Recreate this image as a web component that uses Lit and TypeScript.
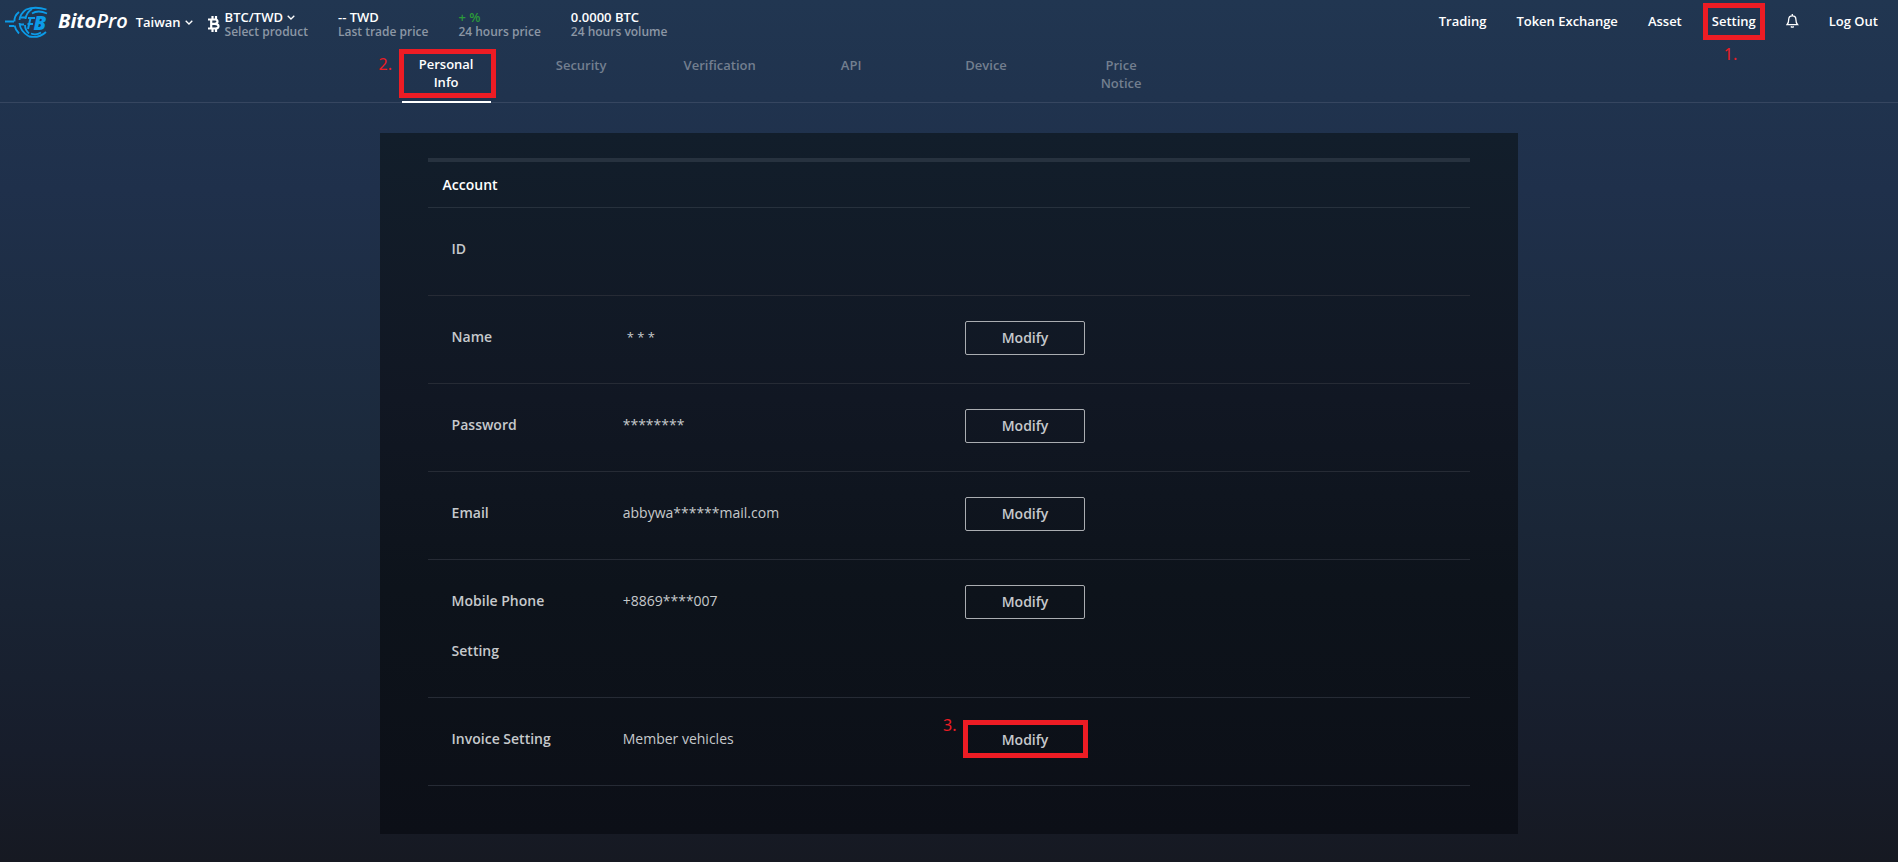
import { LitElement, html, css, nothing } from "lit";
import { customElement } from "lit/decorators.js";

interface Row {
  id: string;
  label: string;
  value?: string;
  spaced?: boolean;
  editable?: boolean;
  step?: string;
}

const ROWS: Row[] = [
  { id: "id", label: "ID" },
  { id: "name", label: "Name", value: "* * *", spaced: true, editable: true },
  { id: "password", label: "Password", value: "********", editable: true },
  { id: "email", label: "Email", value: "abbywa******mail.com", editable: true },
  { id: "phone", label: "Mobile Phone Setting", value: "+8869****007", editable: true },
  { id: "invoice", label: "Invoice Setting", value: "Member vehicles", editable: true, step: "3." },
];

const STATS = [
  { value: "-- TWD", label: "Last trade price", tone: "" },
  { value: "+ %", label: "24 hours price", tone: "up" },
  { value: "0.0000 BTC", label: "24 hours volume", tone: "" },
];

const TABS = ["Personal Info", "Security", "Verification", "API", "Device", "Price Notice"];

const chevron = html`<svg class="chevron" viewBox="0 0 8 5" aria-hidden="true">
  <path d="M0.7 0.7 4 4 7.3 0.7" fill="none" stroke="currentColor" stroke-width="1.3" />
</svg>`;

@customElement("app-header")
export class AppHeader extends LitElement {
  static styles = css`
    :host { display: flex; justify-content: space-between; height: 48px; padding: 0 20px 0 5px; }
    a { color: inherit; text-decoration: none; }
    button { font: inherit; color: inherit; background: none; border: 0; padding: 0; cursor: pointer; }
    .left, .right, .brand, .pair { display: flex; }
    .left { align-items: flex-start; }
    .brand { align-items: center; gap: 8px; height: 44px; }
    .mark { width: 45px; height: 32px; }
    .word { font-size: 20px; line-height: 42px; height: 44px; font-weight: 700; font-style: italic; }
    .pro { font-weight: 600; }
    .country { margin-left: 8px; line-height: 44px; font-weight: 600; }
    .chevron { width: 8px; height: 5px; margin-left: 4px; vertical-align: 2px; }
    .pair { margin-left: 15px; padding-top: 9px; gap: 5px; text-align: left; }
    .coin { width: 12px; height: 16px; margin-top: 7px; }
    .stat { display: grid; grid-template-rows: 16px 14px; line-height: 16px; font-weight: 600; }
    .stats { display: flex; gap: 30px; padding: 9px 0 0 30px; }
    .sub { font-size: 12px; line-height: 14px; color: #8c97a5; }
    .up { color: #2b9a3a; }
    .right { align-items: center; gap: 30px; height: 42px; font-weight: 600; }
    .marked { position: relative; }
    .marked::after { content: ""; position: absolute; inset: -8px -9px -9px -9px; border: 5px solid #ed1c24; }
    .step { position: absolute; top: 33px; left: 12px; font: 16px/20px "Noto Sans", sans-serif; color: #ed1c24; }
    .bell { width: 13px; height: 14px; display: block; }
  `;

  render() {
    return html`
      <div class="left">
        <a class="brand" href="#">
          <svg class="mark" viewBox="0 0 45 32" fill="none" stroke="#0c9be8" stroke-width="1.8" aria-hidden="true">
            <path d="M0 15.500H9 M4 20H9" />
            <path d="M14 6Q9 10 9.500 15.500 M9.500 19.500Q10.500 24 14 27.500" />
            <path d="M21 3.500Q15 8 14.500 14 M14.500 17Q15 25 24 30.500" />
            <path d="M27 3Q21 7 20.500 13 M20 19Q20 24 24 27.500" />
            <path d="M21 3.500Q30 0 41.500 3.500 M27 7.500Q33 3.500 42 7.500" />
            <path d="M24 30.500Q34 32.500 41 26 M26 27.500Q31 29.500 36 26.500" />
            <path d="M16 11.500H20 M15 18.500H19 M23 12H30 M22.500 18H28 M25.500 12 23 23" stroke-width="2" />
            <text x="28.500" y="24" font-family="Open Sans" font-size="20" font-weight="800" font-style="italic" fill="#0c9be8" stroke="none">B</text>
          </svg>
          <span class="word">Bito<span class="pro">Pro</span></span>
        </a>
        <button class="country">Taiwan${chevron}</button>
        <button class="pair">
          <svg class="coin" viewBox="0 0 12 16" fill="none" stroke="#fff" stroke-width="2.200" aria-hidden="true">
            <path d="M0 3.500H7Q9.500 3.500 9.500 5.500T7 7.800H3 M7 7.800Q10.500 8 10.500 10.300T7 12.500H0 M3.200 3V13 M4.500 0V3 M8 0V3 M4.500 13V16 M8 13V16" />
          </svg>
          <span class="stat"><span>BTC/TWD${chevron}</span><span class="sub">Select product</span></span>
        </button>
        <div class="stats">
          ${STATS.map((s) => html`<div class="stat"><span class=${s.tone}>${s.value}</span><span class="sub">${s.label}</span></div>`)}
        </div>
      </div>
      <nav class="right">
        <a href="#">Trading</a>
        <a href="#">Token Exchange</a>
        <a href="#">Asset</a>
        <a class="marked" href="#">Setting<span class="step">1.</span></a>
        <a href="#" aria-label="Notifications">
          <svg class="bell" viewBox="0 0 13 14" fill="none" stroke="#fff" stroke-width="1.300">
            <path d="M1 10.700Q2.700 9 2.700 5.500Q2.700 1.800 6.300 1.800T9.900 5.500Q9.900 9 11.600 10.700Z M6.300 0V2 M4.800 12.500Q6.300 13.800 7.800 12.500" />
          </svg>
        </a>
        <a href="#">Log Out</a>
      </nav>
    `;
  }
}

@customElement("settings-tabs")
export class SettingsTabs extends LitElement {
  static styles = css`
    :host { display: block; padding: 0 20%; border-bottom: 1px solid #364660; }
    .tabs { display: flex; padding-left: 22px; gap: 46px; margin-bottom: -1px; }
    .tab { position: relative; box-sizing: border-box; width: 89px; height: 55px; padding: 8px 12px 0;
      line-height: 18px; font-weight: 600; text-align: center; color: #737f8f; text-decoration: none; }
    .active { color: #fff; padding-top: 7px; border-bottom: 2px solid #fff; }
    .active::after { content: ""; position: absolute; inset: 1px -5px 3px -3px; border: 5px solid #ed1c24; }
    .step { position: absolute; top: 6px; left: -23px; font: 16px/20px "Noto Sans", sans-serif; color: #ed1c24; }
  `;

  render() {
    return html`<nav class="tabs">
      ${TABS.map((t, i) => html`<a class="tab ${i === 0 ? "active" : ""}" href="#">${t}${i === 0 ? html`<span class="step">2.</span>` : nothing}</a>`)}
    </nav>`;
  }
}

@customElement("account-card")
export class AccountCard extends LitElement {
  static styles = css`
    :host { display: block; margin: 30px 20% 0; padding: 25px 48px 48px;
      background: linear-gradient(#121e2b, #111723 38%, #0d131b 65%, #0c0f17); }
    h2 { margin: 0; padding: 13px 15px 12px; border-top: 4px solid #27323f; border-bottom: 1px solid #27313d;
      font-size: 14px; line-height: 20px; font-weight: 600; color: #fff; }
    .rows { margin: 0; }
    .row { display: grid; grid-template-columns: 4fr 8fr 12fr; min-height: 87px; padding-left: 16px; border-bottom: 1px solid #262b35; }
    .label, .value, .action { margin: 0; padding: 0 8px; font-size: 14px; color: #c6c9cc; }
    .label { padding: 16px 60px 21px 8px; line-height: 50px; font-weight: 600; }
    .wide { padding-right: 8px; }
    .value { padding-top: 16px; line-height: 50px; }
    .spaced { padding-left: 12px; font-size: 13px; }
    .action { padding-top: 25px; }
    .modify { position: relative; box-sizing: border-box; width: 120px; height: 34px; padding: 0; background: none;
      border: 1px solid #aaadb1; border-radius: 2px; font: 600 14px/20px "Open Sans", sans-serif; color: #c6c9cc; cursor: pointer; }
    .marked::after { content: ""; position: absolute; inset: -4px -4px -2px -3px; border: 5px solid #ed1c24; }
    .step { position: absolute; top: -9px; left: -23px; font: 16px/20px "Noto Sans", sans-serif; color: #ed1c24; }
  `;

  render() {
    return html`
      <h2>Account</h2>
      <dl class="rows">
        ${ROWS.map((r) => html`<div class="row">
          <dt class="label ${r.id === "phone" ? "" : "wide"}" id=${r.id}>${r.label}</dt>
          <dd class="value ${r.spaced ? "spaced" : ""}">${r.value ?? nothing}</dd>
          <dd class="action">${r.editable
            ? html`<button class="modify ${r.step ? "marked" : ""}" aria-describedby=${r.id}>Modify${r.step ? html`<span class="step">${r.step}</span>` : nothing}</button>`
            : nothing}</dd>
        </div>`)}
      </dl>
    `;
  }
}

@customElement("app-root")
export class AppRoot extends LitElement {
  static styles = css`
    :host { display: flow-root; box-sizing: border-box; min-height: 100vh; padding-bottom: 28px; color: #fff;
      font: 13px/20px "Open Sans", sans-serif;
      background: linear-gradient(#213651, #1f304b 22%, #1b293b 53%, #171d2b 87%, #161922); }
  `;

  render() {
    return html`
      <app-header></app-header>
      <settings-tabs></settings-tabs>
      <account-card></account-card>
    `;
  }
}
